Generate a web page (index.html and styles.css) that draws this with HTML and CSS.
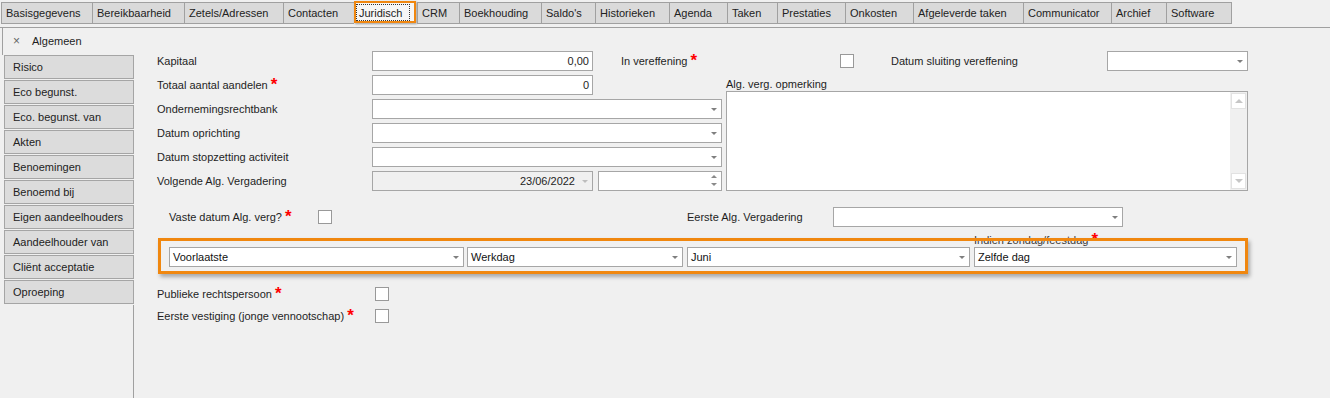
FILE: index.html
```html
<!DOCTYPE html>
<html lang="nl">
<head>
    <meta charset="UTF-8">
    <title>Juridisch</title>
    <link rel="stylesheet" href="styles.css">
</head>
<body>
    <div class="tabs">
        <div class="tab">Basisgegevens</div>
        <div class="tab">Bereikbaarheid</div>
        <div class="tab">Zetels/Adressen</div>
        <div class="tab">Contacten</div>
        <div class="tab active"><span class="focus">Juridisch</span></div>
        <div class="tab">CRM</div>
        <div class="tab">Boekhouding</div>
        <div class="tab">Saldo's</div>
        <div class="tab">Historieken</div>
        <div class="tab">Agenda</div>
        <div class="tab">Taken</div>
        <div class="tab">Prestaties</div>
        <div class="tab">Onkosten</div>
        <div class="tab">Afgeleverde taken</div>
        <div class="tab">Communicator</div>
        <div class="tab">Archief</div>
        <div class="tab last">Software</div>
    </div>

    <div class="page">
        <aside class="side">
            <div class="side-head"><span class="close">×</span>Algemeen</div>
            <div class="side-btn">Risico</div>
            <div class="side-btn">Eco begunst.</div>
            <div class="side-btn">Eco. begunst. van</div>
            <div class="side-btn">Akten</div>
            <div class="side-btn">Benoemingen</div>
            <div class="side-btn">Benoemd bij</div>
            <div class="side-btn">Eigen aandeelhouders</div>
            <div class="side-btn">Aandeelhouder van</div>
            <div class="side-btn">Cliënt acceptatie</div>
            <div class="side-btn">Oproeping</div>
            <div class="side-rest"></div>
        </aside>

        <main class="form">
            <!-- eerste regel: kapitaal + vereffening -->
            <div class="row">
                <div class="lbl lbl-main">Kapitaal</div>
                <div class="field num w-short">0,00</div>
                <div class="lbl lbl-veref">In vereffening <span class="req">*</span></div>
                <span class="check"></span>
                <div class="lbl lbl-sluit">Datum sluiting vereffening</div>
                <div class="field dd w-sluit"></div>
            </div>

            <div class="split">
                <div class="left">
                    <div class="row">
                        <div class="lbl lbl-main">Totaal aantal aandelen <span class="req">*</span></div>
                        <div class="field num w-short">0</div>
                    </div>
                    <div class="row">
                        <div class="lbl lbl-main">Ondernemingsrechtbank</div>
                        <div class="field dd w-long"></div>
                    </div>
                    <div class="row">
                        <div class="lbl lbl-main">Datum oprichting</div>
                        <div class="field dd w-long"></div>
                    </div>
                    <div class="row">
                        <div class="lbl lbl-main">Datum stopzetting activiteit</div>
                        <div class="field dd w-long"></div>
                    </div>
                    <div class="row">
                        <div class="lbl lbl-main">Volgende Alg. Vergadering</div>
                        <div class="field num disabled dd dd-light w-short">23/06/2022</div>
                        <div class="field spin w-spin"></div>
                    </div>
                </div>
                <div class="right">
                    <div class="ta-label">Alg. verg. opmerking</div>
                    <div class="textarea">
                        <div class="vscroll">
                            <span class="sbtn up"></span>
                            <span class="sbtn down"></span>
                        </div>
                    </div>
                </div>
            </div>

            <div class="row row-vaste">
                <div class="lbl lbl-vaste">Vaste datum Alg. verg? <span class="req">*</span></div>
                <span class="check"></span>
                <div class="lbl lbl-eerste">Eerste Alg. Vergadering</div>
                <div class="field dd w-eerste"></div>
            </div>

            <div class="box">
                <div class="box-label">Indien zondag/feestdag <span class="req">*</span></div>
                <div class="field dd val w-voor">Voorlaatste</div>
                <div class="field dd val w-werk">Werkdag</div>
                <div class="field dd val w-maand">Juni</div>
                <div class="field dd val w-zelf">Zelfde dag</div>
            </div>

            <div class="row row-check first">
                <div class="lbl lbl-check">Publieke rechtspersoon <span class="req">*</span></div>
                <span class="check"></span>
            </div>
            <div class="row row-check">
                <div class="lbl lbl-check">Eerste vestiging (jonge vennootschap) <span class="req">*</span></div>
                <span class="check"></span>
            </div>
        </main>
    </div>
</body>
</html>
```

FILE: styles.css
```css
* {
    box-sizing: border-box;
}
body {
    margin: 0;
    height: 398px;
    overflow: hidden;
    background-color: #f0f0f0;
    font-family: "Liberation Sans", Arial, sans-serif;
    font-size: 11px;
    color: #1e1e1e;
}

/* tab strip */
.tabs {
    display: grid;
    grid-template-columns: 91px 92px 99px 71px 63px 42px 82px 54px 74px 58px 50px 68px 68px 110px 88px 55px 66px;
    height: 28px;
    padding-left: 1px;
    border-bottom: 1px solid #a0a0a0;
}
.tab {
    margin-top: 2px;
    height: 22px;
    padding-left: 4px;
    line-height: 21px;
    white-space: nowrap;
    background-color: #dadada;
    border: 1px solid #a0a0a0;
    border-right: none;
    color: #222;
}
.tab.last {
    border-right: 1px solid #a0a0a0;
}
.tab.active {
    margin-top: 1px;
    width: 62px;
    padding: 1px 0 0 0;
    background-color: #f6f6f6;
    border: 2px solid #f0870f;
    box-shadow: 1px 1px 2px rgba(0, 0, 0, 0.35);
}
.focus {
    display: block;
    margin-right: 4px;
    height: 17px;
    padding-left: 2px;
    line-height: 17px;
    border: 1px dotted #333;
}

.page {
    display: flex;
    height: 370px;
}

/* left menu */
.side {
    width: 134px;
    display: flex;
    flex-direction: column;
}
.side-head {
    height: 27px;
    margin-left: 2px;
    padding-left: 10px;
    line-height: 27px;
    border-left: 1px solid #a0a0a0;
}
.close {
    display: inline-block;
    width: 19px;
    color: #666;
    font-size: 12px;
}
.side-btn {
    margin-left: 4px;
    width: 130px;
    height: 24px;
    margin-bottom: 1px;
    padding-left: 8px;
    line-height: 22px;
    background-color: #dcdcdc;
    border: 1px solid #a5a5a5;
    color: #222;
}
.side-rest {
    flex: 1;
    border-right: 1px solid #a0a0a0;
}

/* form */
.form {
    flex: 1;
    padding: 23px 0 0 23px;
}
.row {
    display: flex;
    align-items: center;
    height: 20px;
    margin-bottom: 4px;
}
.lbl {
    line-height: 20px;
    white-space: nowrap;
    flex-shrink: 0;
}
.lbl-main { width: 215px; }
.lbl-veref { width: 219px; margin-left: 28px; }
.lbl-sluit { width: 216px; margin-left: 37px; }
.lbl-vaste { width: 149px; margin-left: 12px; }
.lbl-eerste { width: 146px; margin-left: 355px; }
.lbl-check { width: 218px; line-height: 14px; }

.req {
    position: relative;
    top: 1px;
    color: #ff0000;
    font-weight: bold;
    font-size: 17px;
    line-height: 0;
}

.field {
    position: relative;
    height: 20px;
    flex-shrink: 0;
    background-color: #fff;
    border: 1px solid #a6a6a6;
    line-height: 18px;
    padding: 0 3px;
    white-space: nowrap;
}
.field.num {
    text-align: right;
    padding-right: 3px;
}
.field.disabled {
    background-color: #f0f0f0;
    padding-right: 17px;
}
.dd::after {
    content: "";
    position: absolute;
    right: 4px;
    top: 8px;
    border-left: 3px solid transparent;
    border-right: 3px solid transparent;
    border-top: 3px solid #7f7f7f;
}
.dd-light::after {
    border-top-color: #bdbdbd;
}
.spin::before,
.spin::after {
    content: "";
    position: absolute;
    right: 4px;
    border-left: 3px solid transparent;
    border-right: 3px solid transparent;
}
.spin::before {
    top: 3px;
    border-bottom: 3px solid #8a8a8a;
}
.spin::after {
    top: 11px;
    border-top: 3px solid #8a8a8a;
}

.w-short { width: 221px; }
.w-long { width: 350px; }
.w-spin { width: 124px; margin-left: 5px; }
.w-sluit { width: 141px; }
.w-eerste { width: 290px; }
.w-voor { width: 295px; }
.w-werk { width: 216px; margin-left: 3px; }
.w-maand { width: 283px; margin-left: 4px; }
.w-zelf { width: 263px; margin-left: 4px; }

/* left rows + remark box */
.split {
    display: flex;
}
.left {
    width: 569px;
}
.left .row:last-child {
    margin-bottom: 0;
}
.right {
    width: 522px;
}
.ta-label {
    height: 16px;
    line-height: 18px;
}
.textarea {
    height: 100px;
    background-color: #fff;
    border: 1px solid #a6a6a6;
    display: flex;
    justify-content: flex-end;
}
.vscroll {
    width: 17px;
    background-color: #f0f0f0;
    display: flex;
    flex-direction: column;
    justify-content: space-between;
    align-items: center;
    padding: 1px 0;
}
.sbtn {
    position: relative;
    width: 15px;
    height: 16px;
    background-color: #fff;
    border: 1px solid #e2e2e2;
}
.sbtn::after {
    content: "";
    position: absolute;
    left: 3px;
    top: 5px;
    border-left: 4px solid transparent;
    border-right: 4px solid transparent;
}
.sbtn.up::after {
    border-bottom: 4px solid #c6c6c6;
}
.sbtn.down::after {
    border-top: 4px solid #c6c6c6;
}

.row-vaste {
    margin-top: 16px;
    margin-bottom: 0;
}

/* orange highlighted group */
.box {
    position: relative;
    display: flex;
    margin: 11px 0 0 1px;
    width: 1090px;
    height: 36px;
    padding: 6px 8px 4px 8px;
    border: 3px solid #f0870f;
    box-shadow: 2px 3px 4px rgba(0, 0, 0, 0.3);
}
.box::after {
    content: "";
    position: absolute;
    left: -3px;
    right: -3px;
    top: -3px;
    height: 3px;
    background-color: #f0870f;
}
.box-label {
    position: absolute;
    left: 813px;
    top: -8px;
    line-height: 14px;
    color: #3a3a3a;
    white-space: nowrap;
}
.field.val {
    color: #111;
}

.check {
    display: inline-block;
    width: 14px;
    height: 14px;
    flex-shrink: 0;
    background-color: #fff;
    border: 1px solid #999;
}
.row-check {
    height: 14px;
    margin-bottom: 8px;
}
.row-check.first {
    margin-top: 13px;
}
```
